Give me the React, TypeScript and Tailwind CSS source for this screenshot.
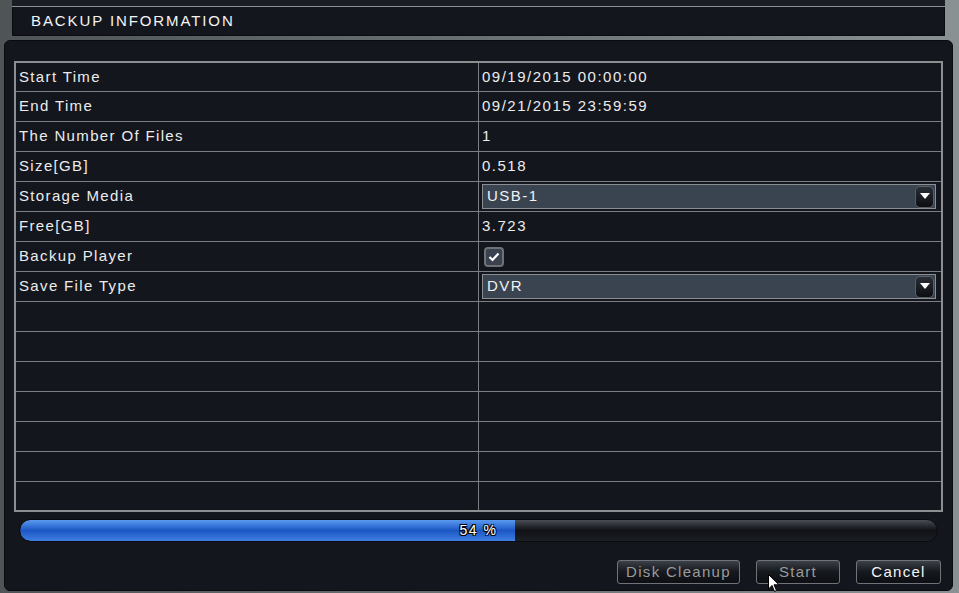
import React from 'react';

const font = { fontFamily: '"Liberation Sans", Arial, sans-serif' };

type Row = { label: string; value?: string; kind?: 'text' | 'select' | 'check' };

const rows: Row[] = [
  { label: 'Start Time', value: '09/19/2015 00:00:00' },
  { label: 'End Time', value: '09/21/2015 23:59:59' },
  { label: 'The Number Of Files', value: '1' },
  { label: 'Size[GB]', value: '0.518' },
  { label: 'Storage Media', value: 'USB-1', kind: 'select' },
  { label: 'Free[GB]', value: '3.723' },
  { label: 'Backup Player', kind: 'check' },
  { label: 'Save File Type', value: 'DVR', kind: 'select' },
  { label: '' },
  { label: '' },
  { label: '' },
  { label: '' },
  { label: '' },
  { label: '' },
  { label: '' },
];

function Select({ value }: { value: string }) {
  return (
    <div className="ml-[3px] mr-[5px] flex h-[25px] flex-1 items-center justify-between border border-[#8a8d92] bg-[#3a4450] pl-[4px] pr-[1px]">
      <span className="text-[15px] tracking-[1.5px] text-[#f2f2f2]">{value}</span>
      <div className="flex h-[22px] w-[19px] items-center justify-center rounded-[5px] border border-[#5a5f66] bg-gradient-to-b from-[#2a2e36] to-[#0c0e12]">
        <svg width="10" height="7" viewBox="0 0 10 7">
          <path d="M0 0 H10 L5 6 Z" fill="#ffffff" />
        </svg>
      </div>
    </div>
  );
}

function Check() {
  return (
    <div className="ml-[5px] flex h-[20px] w-[20px] items-center justify-center rounded-[4px] border-2 border-[#6e7176] bg-[#3a4250]">
      <svg width="12" height="10" viewBox="0 0 12 10">
        <path d="M1.5 5 L4.5 8 L10.5 1.5" stroke="#ffffff" strokeWidth="2.2" fill="none" />
      </svg>
    </div>
  );
}

function Button({ label, dim, w }: { label: string; dim?: boolean; w: string }) {
  return (
    <div
      className={`flex h-[24px] ${w} items-center justify-center rounded-[3px] border border-[#70747a] bg-gradient-to-b from-[#3c4048] via-[#15181d] to-[#0d0f13] text-[15px] tracking-[1.3px] ${
        dim ? 'text-[#9b9b9b]' : 'text-[#f4f4f4]'
      }`}
    >
      {label}
    </div>
  );
}

export default function App() {
  return (
    <div
      className="relative h-[593px] w-[959px] overflow-hidden bg-gradient-to-r from-[#4f5556] via-[#6a7172] to-[#8a9192]"
      style={font}
    >
      {/* title bar */}
      <div className="ml-[12px] mr-[14px] bg-[#16181f]">
        <div className="h-[6px] bg-[#1b1d24]" />
        <div className="h-[1px] bg-[#8e9094]" />
        <div className="flex h-[29px] items-center rounded-b-[4px] border-b border-l border-r border-[#0a0b0e] bg-[#14161d] pl-[18px] text-[15px] tracking-[1.9px] text-[#f4f4f4]">
          BACKUP INFORMATION
        </div>
      </div>

      {/* main panel */}
      <div className="ml-[4px] mr-[6px] mt-[4px] flex h-[551px] flex-col rounded-[6px] border border-[#0a0b0e] bg-[#14161d] px-[9px] pt-[20px]">
        <div className="border-2 border-[#8c8e92]">
          {rows.map((r, i) => (
            <div
              key={i}
              className={`flex ${i === 0 ? 'h-[29px]' : i === rows.length - 1 ? 'h-[28px]' : 'h-[30px]'} ${
                i < rows.length - 1 ? 'border-b border-[#7c7e83]' : ''
              }`}
            >
              <div className="flex w-[463px] items-center border-r border-[#7c7e83] pl-[3px] text-[15px] tracking-[1.35px] text-[#ececec]">
                {r.label}
              </div>
              <div className="flex flex-1 items-center">
                {r.kind === 'select' && r.value ? (
                  <Select value={r.value} />
                ) : r.kind === 'check' ? (
                  <Check />
                ) : (
                  <span className="pl-[3px] text-[15px] tracking-[1.5px] text-[#ececec]">{r.value}</span>
                )}
              </div>
            </div>
          ))}
        </div>

        {/* progress */}
        <div className="relative ml-[5px] mr-[5px] mt-[7px] h-[23px] overflow-hidden rounded-full border border-[#0a0b0e] bg-gradient-to-b from-[#4a4e55] via-[#101216] to-[#1c1f25]">
          <div
            className="h-full rounded-l-full bg-gradient-to-b from-[#5b9af0] via-[#1c56c4] to-[#3f7fe2]"
            style={{ width: '54%' }}
          />
          <div
            className="absolute inset-0 flex items-center justify-center text-[14px] tracking-[1.5px] text-white"
            style={{ textShadow: '1px 1px 0 #000, -1px -1px 0 #000, 1px -1px 0 #000, -1px 1px 0 #000' }}
          >
            54 %
          </div>
        </div>

        <div className="mt-[18px] flex justify-end gap-[16px] pr-[2px]">
          <Button label="Disk Cleanup" dim w="w-[123px]" />
          <Button label="Start" dim w="w-[84px]" />
          <Button label="Cancel" w="w-[85px]" />
        </div>
      </div>

      {/* mouse cursor */}
      <svg className="absolute left-[768px] top-[574px]" width="12" height="19" viewBox="0 0 12 19">
        <path d="M0.5 0.5 V15 L4 11.5 L6.5 17.5 L8.5 16.5 L6 10.8 H11 Z" fill="#ffffff" stroke="#000000" strokeWidth="1" />
      </svg>
    </div>
  );
}
